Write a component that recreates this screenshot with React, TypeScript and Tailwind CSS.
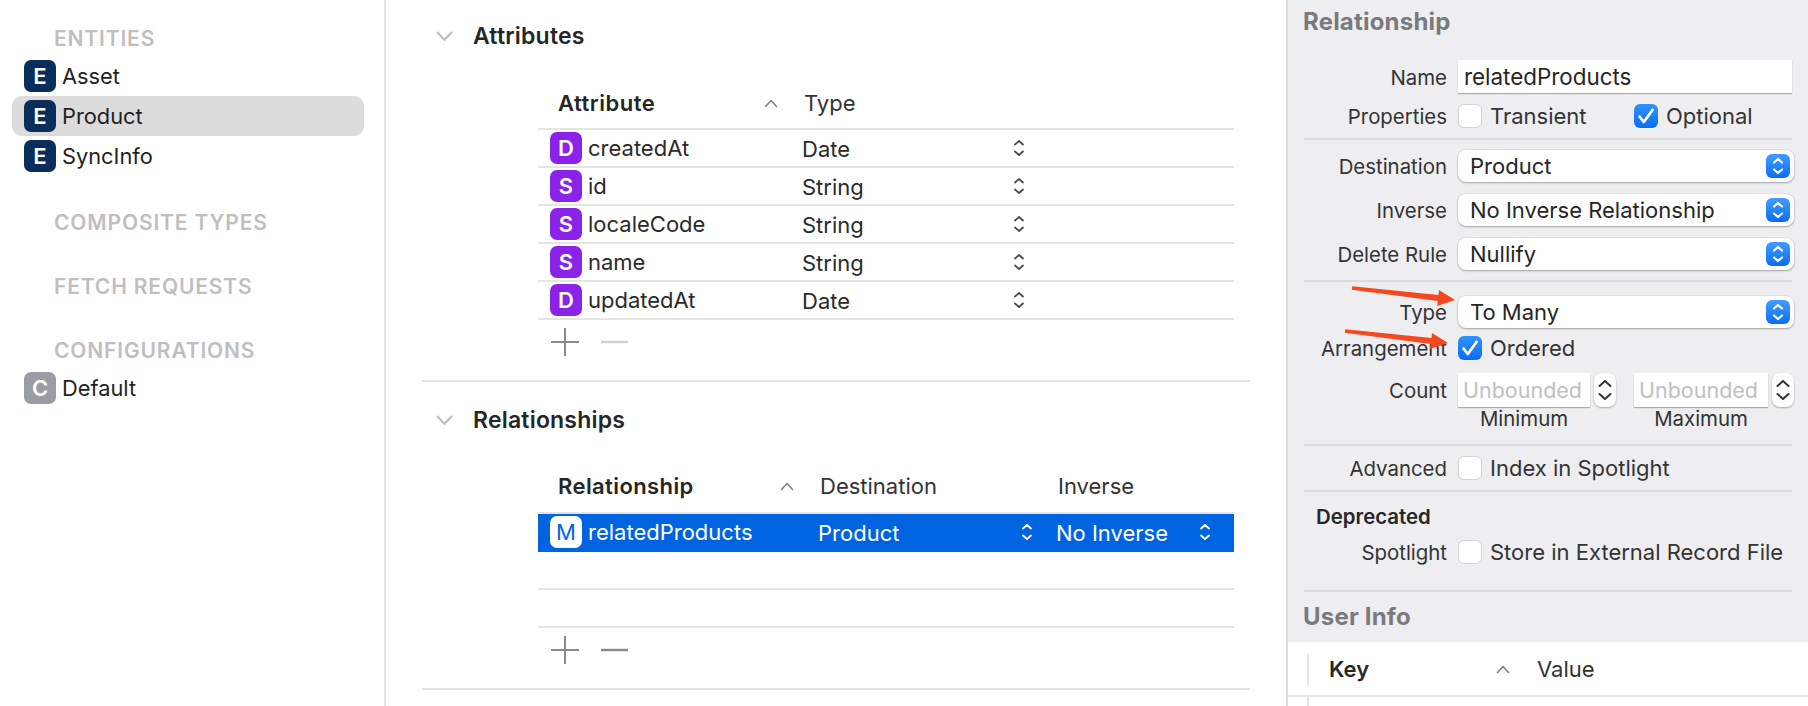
import type { ReactNode } from 'react'

const FONT = { fontFamily: 'Inter, "Noto Sans", sans-serif' }

function Tile({ letter, color }: { letter: string; color: string }) {
  return (
    <span className={`flex h-8 w-8 shrink-0 items-center justify-center rounded-[7px] text-[22px] ${color}`}>
      {letter}
    </span>
  )
}

function UpDown({ color = '#4a4a4a', weight = 1.8 }: { color?: string; weight?: number }) {
  return (
    <svg width="12" height="20" viewBox="0 0 12 20" fill="none" stroke={color} strokeWidth={weight} strokeLinecap="round" strokeLinejoin="round">
      <path d="M2 6.5 L6 3 L10 6.5" />
      <path d="M2 13.5 L6 17 L10 13.5" />
    </svg>
  )
}

function SortUp() {
  return (
    <svg width="14" height="9" viewBox="0 0 14 9" fill="none" stroke="#808080" strokeWidth="1.6" strokeLinecap="round" strokeLinejoin="round">
      <path d="M1.5 7.5 L7 1.5 L12.5 7.5" />
    </svg>
  )
}

function PlusMinus({ minusColor }: { minusColor: string }) {
  return (
    <div className="flex h-11 items-center pl-[13px]">
      <svg width="28" height="28" viewBox="0 0 28 28" stroke="#8a8a8a" strokeWidth="2">
        <path d="M0 14 H28 M14 0 V28" />
      </svg>
      <svg className="ml-[22px]" width="27" height="28" viewBox="0 0 27 28" stroke={minusColor} strokeWidth="2.4">
        <path d="M0 14 H27" />
      </svg>
    </div>
  )
}

function SectionTitle({ children, className }: { children: ReactNode; className: string }) {
  return (
    <div className={`flex h-8 items-center pl-[14px] ${className}`}>
      <svg width="17" height="11" viewBox="0 0 17 11" fill="none" stroke="#bdbdbd" strokeWidth="2" strokeLinecap="round" strokeLinejoin="round">
        <path d="M1.5 1.5 L8.5 9 L15.5 1.5" />
      </svg>
      <span className="ml-5 text-[23px] font-semibold tracking-[0.2px] text-[#262626]">{children}</span>
    </div>
  )
}

function SideHead({ children, className }: { children: ReactNode; className: string }) {
  return (
    <div className={`flex h-6 items-center pl-[54px] pt-0.5 text-[21px] font-semibold tracking-[0.85px] text-[#bfbfbf] ${className}`}>
      {children}
    </div>
  )
}

function SideRow({ name, selected, tile }: { name: string; selected?: boolean; tile?: string }) {
  return (
    <div className={`mx-3 flex h-10 w-[352px] items-center rounded-[10px] pl-3 text-[21.8px] text-[#1f1f1f] ${selected ? 'bg-[#dcdcdc]' : ''}`}>
      <Tile letter={tile ?? 'E'} color={tile ? 'bg-[#9a9da1] font-semibold text-white' : 'bg-[#0a2d5a] font-semibold text-white'} />
      <span className="ml-1.5">{name}</span>
    </div>
  )
}

const attributes = [
  ['D', 'createdAt', 'Date'],
  ['S', 'id', 'String'],
  ['S', 'localeCode', 'String'],
  ['S', 'name', 'String'],
  ['D', 'updatedAt', 'Date'],
]

function Popup({ value }: { value: string }) {
  return (
    <div className="ml-[11px] flex h-8 w-[336px] items-center justify-between rounded-[8px] bg-white pl-3 pr-1 shadow-[0_1px_2px_rgba(0,0,0,0.3),0_0_0_1px_rgba(0,0,0,0.04)]">
      <span className="text-[22px] text-[#262626]">{value}</span>
      <span className="flex h-6 w-6 items-center justify-center rounded-[6px] bg-gradient-to-b from-[#3f9dff] to-[#0a6cf0]">
        <UpDown color="#ffffff" weight={2.2} />
      </span>
    </div>
  )
}

function Check({ on }: { on?: boolean }) {
  if (on) {
    return (
      <span className="flex h-6 w-6 shrink-0 items-center justify-center rounded-[6px] bg-gradient-to-b from-[#2f93ff] to-[#0a6cf0]">
        <svg width="18" height="16" viewBox="0 0 18 16" fill="none" stroke="#ffffff" strokeWidth="2.8" strokeLinecap="round" strokeLinejoin="round">
          <path d="M2.5 8.5 L6.8 14 L15.5 2" />
        </svg>
      </span>
    )
  }
  return <span className="block h-6 w-6 shrink-0 rounded-[6px] border border-[#d4d4d6] bg-white" />
}

function Row({ label, children, className = '' }: { label: string; children: ReactNode; className?: string }) {
  return (
    <div className={`flex items-center ${className}`}>
      <span className="w-[159px] shrink-0 pt-0.5 text-right text-[20.4px] leading-[22px] text-[#333333]">{label}</span>
      {children}
    </div>
  )
}

function Rule({ className }: { className: string }) {
  return <div className={`mx-4 h-0.5 bg-[#dcdcde] ${className}`} />
}

function CheckRow({ label, text, className }: { label: string; text: string; className: string }) {
  return (
    <Row label={label} className={`h-6 ${className}`}>
      <span className="ml-[11px]"><Check /></span>
      <span className="ml-2 text-[22px] text-[#333333]">{text}</span>
    </Row>
  )
}

function Stepper() {
  return (
    <span className="ml-1 flex h-[34px] w-[22px] flex-col items-center justify-center rounded-[8px] bg-white shadow-[0_1px_2px_rgba(0,0,0,0.3)]">
      <svg width="16" height="26" viewBox="0 0 16 26" fill="none" stroke="#333333" strokeWidth="2" strokeLinecap="round" strokeLinejoin="round">
        <path d="M2.5 9 L8 4 L13.5 9" />
        <path d="M2.5 17 L8 22 L13.5 17" />
      </svg>
    </span>
  )
}

function CountField({ width }: { width: string }) {
  return (
    <span className={`flex h-[34px] items-center bg-white pl-[5px] text-[21.5px] text-[#c0c0c0] shadow-[0_1px_1px_rgba(0,0,0,0.28)] ${width}`}>
      Unbounded
    </span>
  )
}

function Inspector() {
  return (
    <aside className="h-full w-[522px] shrink-0 overflow-hidden border-l-2 border-[#dedede] bg-[#eeeef0]">
      <div className="mt-1.5 flex h-8 items-center pl-[15px] text-[24px] font-bold tracking-[0.2px] text-[#7a7a7e]">Relationship</div>

      <Row label="Name" className="mt-[22px] h-[33px]">
        <span className="ml-[11px] flex h-[33px] w-[334px] items-center bg-white pl-[6px] text-[22.4px] text-[#262626] shadow-[0_1px_1px_rgba(0,0,0,0.28)]">
          relatedProducts
        </span>
      </Row>
      <Row label="Properties" className="mt-[11px] h-6">
        <span className="ml-[11px]"><Check /></span>
        <span className="ml-2 w-[144px] text-[22px] text-[#333333]">Transient</span>
        <Check on />
        <span className="ml-2 text-[22px] text-[#333333]">Optional</span>
      </Row>
      <Rule className="mt-[10px]" />

      <Row label="Destination" className="mt-[10px]"><Popup value="Product" /></Row>
      <Row label="Inverse" className="mt-3"><Popup value="No Inverse Relationship" /></Row>
      <Row label="Delete Rule" className="mt-3"><Popup value="Nullify" /></Row>
      <Rule className="mt-[10px]" />

      <Row label="Type" className="mt-[14px]"><Popup value="To Many" /></Row>
      <Row label="Arrangement" className="mt-2 h-6">
        <span className="ml-[11px]"><Check on /></span>
        <span className="ml-2 text-[22px] text-[#333333]">Ordered</span>
      </Row>
      <Row label="Count" className="mt-[13px]">
        <span className="ml-[11px] flex items-center">
          <CountField width="w-[132px]" />
          <Stepper />
          <span className="ml-[18px] flex items-center">
            <CountField width="w-[134px]" />
            <Stepper />
          </span>
        </span>
      </Row>
      <div className="mt-0.5 flex h-5 items-center text-[20.4px] text-[#333333]">
        <span className="ml-[170px] w-[132px] text-center">Minimum</span>
        <span className="ml-[44px] w-[134px] text-center">Maximum</span>
      </div>

      <Rule className="mt-[15px]" />
      <CheckRow label="Advanced" text="Index in Spotlight" className="mt-[10px]" />
      <Rule className="mt-[10px]" />
      <div className="mt-[15px] flex h-5 items-center pl-7 text-[20.4px] font-semibold text-[#262626]">Deprecated</div>
      <CheckRow label="Spotlight" text="Store in External Record File" className="mt-[13px]" />
      <Rule className="mt-[26px]" />

      <div className="mt-[9px] flex h-8 items-center pl-[15px] text-[24px] font-bold tracking-[0.2px] text-[#7a7a7e]">User Info</div>
      <div className="mt-[9px] h-16 bg-white">
        <div className="flex h-[55px] items-center border-b-2 border-[#e6e6e6] pt-0.5">
          <span className="ml-[19px] h-8 w-0.5 bg-[#e6e6e6]" />
          <span className="ml-5 w-[167px] text-[22px] font-semibold text-[#262626]">Key</span>
          <SortUp />
          <span className="ml-[27px] text-[22px] text-[#333333]">Value</span>
        </div>
        <span className="ml-[19px] block h-[9px] w-0.5 bg-[#e6e6e6]" />
      </div>
    </aside>
  )
}

function Arrow({ x1, y1, x2, y2 }: { x1: number; y1: number; x2: number; y2: number }) {
  // blunt tail, slightly widening shaft, solid head
  const dx = x2 - x1
  const dy = y2 - y1
  const len = Math.hypot(dx, dy)
  const ux = dx / len
  const uy = dy / len
  const nx = -uy
  const ny = ux
  const bx = x2 - ux * 17
  const by = y2 - uy * 17
  const pts = [
    [x1 + nx * 1.8, y1 + ny * 1.8],
    [bx + nx * 3, by + ny * 3],
    [bx + nx * 8, by + ny * 8],
    [x2, y2],
    [bx - nx * 8, by - ny * 8],
    [bx - nx * 3, by - ny * 3],
    [x1 - nx * 1.8, y1 - ny * 1.8],
  ]
  return <polygon points={pts.map((p) => p.join(',')).join(' ')} fill="#f4481f" />
}

export default function App() {
  return (
    <div className="relative flex h-[706px] w-[1808px] overflow-hidden bg-white" style={FONT}>
      {/* Entity list */}
      <nav className="h-full w-[386px] shrink-0 border-r-2 border-[#e4e4e4] pt-[26px]">
        <SideHead className="mb-1.5">ENTITIES</SideHead>
        <SideRow name="Asset" />
        <SideRow name="Product" selected />
        <SideRow name="SyncInfo" />
        <SideHead className="mt-[34px]">COMPOSITE TYPES</SideHead>
        <SideHead className="mt-10">FETCH REQUESTS</SideHead>
        <SideHead className="mt-10 mb-1.5">CONFIGURATIONS</SideHead>
        <SideRow name="Default" tile="C" />
      </nav>

      {/* Attributes + relationships */}
      <main className="h-full w-[900px] shrink-0 px-9">
        <SectionTitle className="mt-5">Attributes</SectionTitle>
        <div className="ml-[116px] mr-4 mt-[30px]">
          <div className="flex h-12 items-center border-b-2 border-[#e4e4e4] pb-1 text-[22px]">
            <span className="flex w-[266px] items-center justify-between pl-5 pr-[26px] font-semibold tracking-[0.5px] text-[#262626]">
              Attribute <SortUp />
            </span>
            <span className="text-[#333333]">Type</span>
          </div>
          {attributes.map(([letter, name, type]) => (
            <div key={name} className="flex h-[38px] items-center border-b-2 border-[#e4e4e4] text-[22px] text-[#2a2a2a]">
              <span className="flex w-[264px] items-center pl-3">
                <Tile letter={letter} color="bg-[#8a22e8] font-semibold text-white" />
                <span className="ml-1.5">{name}</span>
              </span>
              <span className="flex w-[223px] items-center justify-between">
                <span className="pt-0.5">{type}</span> <UpDown />
              </span>
            </div>
          ))}
          <PlusMinus minusColor="#cfcfcf" />
        </div>
        <div className="mt-4 h-0.5 bg-[#e4e4e4]" />

        <SectionTitle className="mt-[22px]">Relationships</SectionTitle>
        <div className="ml-[116px] mr-4 mt-[30px]">
          <div className="flex h-12 items-center border-b-2 border-[#e4e4e4] pb-1.5 text-[22px] text-[#333333]">
            <span className="flex w-[282px] items-center justify-between pl-5 pr-[26px] font-semibold tracking-[0.4px] text-[#262626]">
              Relationship <SortUp />
            </span>
            <span className="w-[238px]">Destination</span>
            <span>Inverse</span>
          </div>
          <div className="flex h-[38px] items-center bg-[#0064e1] pb-0.5 text-[22px] text-white">
            <span className="flex w-[280px] items-center pl-3">
              <Tile letter="M" color="bg-white font-normal text-[#0064e1]" />
              <span className="ml-1.5">relatedProducts</span>
            </span>
            <span className="flex w-[215px] items-center justify-between">
              <span className="pt-0.5">Product</span> <UpDown color="#ffffff" />
            </span>
            <span className="ml-[23px] flex w-[155px] items-center justify-between">
              <span className="pt-0.5">No Inverse</span> <UpDown color="#ffffff" />
            </span>
          </div>
          <div className="h-[38px] border-b-2 border-[#e4e4e4]" />
          <div className="h-[38px] border-b-2 border-[#e4e4e4]" />
          <PlusMinus minusColor="#8a8a8a" />
        </div>
        <div className="mt-4 h-0.5 bg-[#e4e4e4]" />
      </main>

      <Inspector />

      {/* Red annotation arrows laid over the inspector */}
      <svg className="pointer-events-none absolute left-0 top-0" width="1808" height="706">
        <Arrow x1={1352} y1={288} x2={1455} y2={300} />
        <Arrow x1={1345} y1={331} x2={1448} y2={343} />
      </svg>
    </div>
  )
}
